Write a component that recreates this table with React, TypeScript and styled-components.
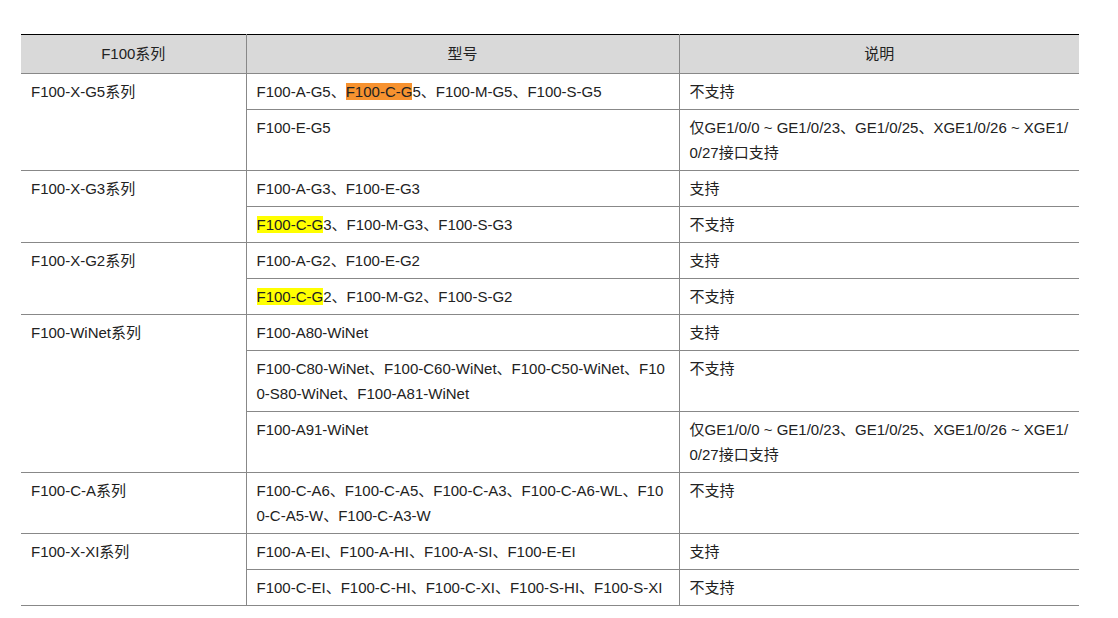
import styled, { createGlobalStyle } from 'styled-components';

const GlobalStyle = createGlobalStyle`
  body {
    margin: 0;
    background: #fff;
    font-family: "Liberation Sans", "Noto Sans CJK SC", Arial, sans-serif;
  }
`

const Page = styled("div")`
  padding: 34px 0 0 21px;
`

const Table = styled("table")`
  width: 1058px;
  border-collapse: collapse;
  table-layout: fixed;
  border-top: 1px solid #000;
  border-bottom: 1px solid #000;
  font-size: 15px;
  line-height: 25px;
  color: #222;
`

const Th = styled("th")`
  background: #d9d9d9;
  font-weight: normal;
  text-align: center;
  padding: 6px 10px 7px 10px;
  height: 25px;
  border-bottom: 1px solid #888;
  border-left: 1px solid #888;
  &:first-child {
    border-left: none;
  }
`

const Td = styled("td")<{ $first?: boolean }>`
  vertical-align: top;
  text-align: left;
  padding: 5px 10px 5px 10px;
  border-bottom: 1px solid #888;
  border-left: ${p => (p.$first ? 'none' : '1px solid #888')};
  word-break: break-all;
`

const Mark = styled("span")<{ $tone: 'orange' | 'yellow' }>`
  background: ${p => (p.$tone === 'orange' ? '#f7922f' : '#ffff00')};
`

type Row = {
  series?: string
  span?: number
  model: React.ReactNode
  note: string
}

const PART = '仅GE1/0/0 ~ GE1/0/23、GE1/0/25、XGE1/0/26 ~ XGE1/0/27接口支持'

const rows: Row[] = [
  { series: 'F100-X-G5系列', span: 2, model: <>F100-A-G5、<Mark $tone="orange">F100-C-G</Mark>5、F100-M-G5、F100-S-G5</>, note: '不支持' },
  { model: 'F100-E-G5', note: PART },
  { series: 'F100-X-G3系列', span: 2, model: 'F100-A-G3、F100-E-G3', note: '支持' },
  { model: <><Mark $tone="yellow">F100-C-G</Mark>3、F100-M-G3、F100-S-G3</>, note: '不支持' },
  { series: 'F100-X-G2系列', span: 2, model: 'F100-A-G2、F100-E-G2', note: '支持' },
  { model: <><Mark $tone="yellow">F100-C-G</Mark>2、F100-M-G2、F100-S-G2</>, note: '不支持' },
  { series: 'F100-WiNet系列', span: 3, model: 'F100-A80-WiNet', note: '支持' },
  { model: 'F100-C80-WiNet、F100-C60-WiNet、F100-C50-WiNet、F100-S80-WiNet、F100-A81-WiNet', note: '不支持' },
  { model: 'F100-A91-WiNet', note: PART },
  { series: 'F100-C-A系列', span: 1, model: 'F100-C-A6、F100-C-A5、F100-C-A3、F100-C-A6-WL、F100-C-A5-W、F100-C-A3-W', note: '不支持' },
  { series: 'F100-X-XI系列', span: 2, model: 'F100-A-EI、F100-A-HI、F100-A-SI、F100-E-EI', note: '支持' },
  { model: 'F100-C-EI、F100-C-HI、F100-C-XI、F100-S-HI、F100-S-XI', note: '不支持' },
]

const App = () => {
  return (
    <Page>
      <GlobalStyle />
      <Table>
        <colgroup>
          <col style={{ width: 225 }} />
          <col style={{ width: 433 }} />
          <col style={{ width: 400 }} />
        </colgroup>
        <thead>
          <tr>
            <Th>F100系列</Th>
            <Th>型号</Th>
            <Th>说明</Th>
          </tr>
        </thead>
        <tbody>
          {rows.map((r, i) => (
            <tr key={i}>
              {r.series ? <Td $first rowSpan={r.span}>{r.series}</Td> : null}
              <Td>{r.model}</Td>
              <Td>{r.note}</Td>
            </tr>
          ))}
        </tbody>
      </Table>
    </Page>
  )
}

export default App
